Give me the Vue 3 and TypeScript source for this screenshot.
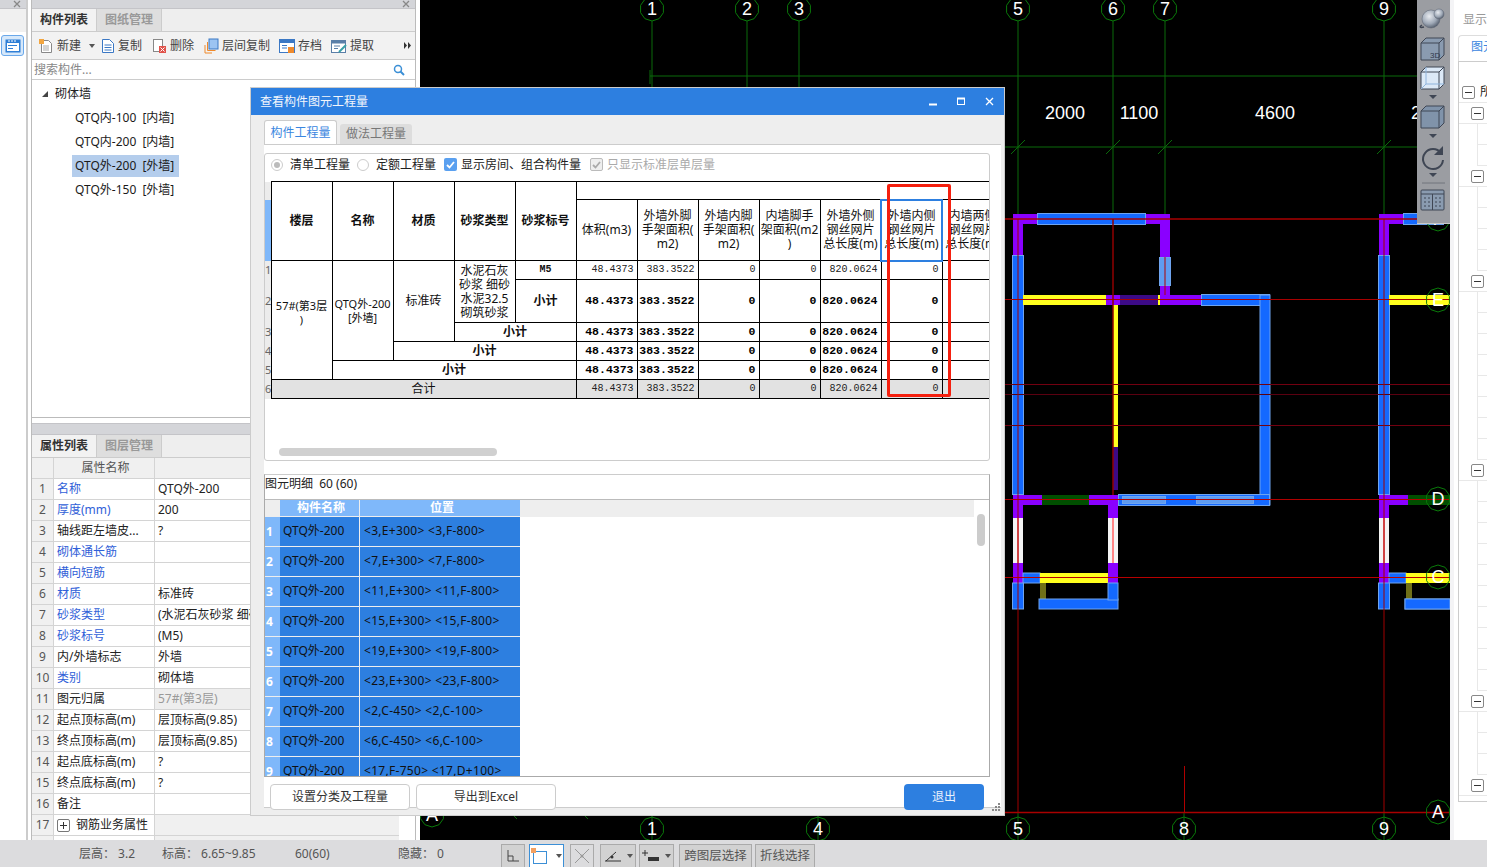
<template>
  <div class="page">
    <div class="main">
      <aside class="rail">
        <div class="grip">
          <svg class="close-x" width="8" height="8" viewBox="0 0 8 8"><path d="M1 1l6 6M7 1L1 7" stroke="#888" stroke-width="1.300" /></svg>
        </div>
        <div class="rail-tab"></div>
        <div class="rail-btn">
          <svg width="16" height="14" viewBox="0 0 16 14">
            <rect x="0.5" y="0.5" width="15" height="13" fill="#2f7fd6" />
            <rect x="2" y="4" width="12" height="8" fill="#fff" />
            <path d="M3 2h2M6 2h2M9 2h2" stroke="#fff" />
            <path d="M3 6.5h9M3 9.5h5" stroke="#2f7fd6" />
          </svg>
        </div>
      </aside>
      <div class="rail-gap"></div>

      <section class="left">
        <div class="list-panel">
          <div class="grip">
            <svg class="close-x" width="8" height="8" viewBox="0 0 8 8"><path d="M1 1l6 6M7 1L1 7" stroke="#888" stroke-width="1.300" /></svg>
          </div>
          <div class="tabs">
            <span class="tab on">构件列表</span>
            <span class="tab">图纸管理</span>
          </div>
          <div class="toolbar">
            <span class="tool new-tool">
              <svg width="16" height="16" viewBox="0 0 16 16"><path d="M3.5 2.5h7l3 3v9h-10z" fill="#fff" stroke="#888" /><rect x="1" y="1" width="5" height="5" fill="#f3a640" /><path d="M5 8h6M5 10h6M5 12h6" stroke="#aaa" /></svg>
              新建<i class="caret"></i>
            </span>
            <span class="tool">
              <svg width="14" height="16" viewBox="0 0 14 16"><path d="M1.5 1.5h7l4 4v9h-11z" fill="#fff" stroke="#3b78c4" /><path d="M3.5 7h7M3.5 9.5h7M3.5 12h7" stroke="#3b78c4" /></svg>
              复制
            </span>
            <span class="tool">
              <svg width="15" height="16" viewBox="0 0 15 16"><rect x="1.5" y="1.5" width="9" height="12" fill="#fff" stroke="#888" /><rect x="7" y="8" width="7" height="7" fill="#e0524a" /><path d="M8.5 9.5l4 4M12.5 9.5l-4 4" stroke="#fff" /></svg>
              删除
            </span>
            <span class="tool">
              <svg width="15" height="16" viewBox="0 0 15 16"><rect x="5" y="1" width="9" height="10" fill="#9cc4f2" stroke="#3b78c4" /><path d="M3.5 4v8.5h8M1 7v8h7" fill="none" stroke="#ef8a2c" /></svg>
              层间复制
            </span>
            <span class="tool">
              <svg width="16" height="16" viewBox="0 0 16 16"><rect x="0.5" y="1.5" width="15" height="13" fill="#fff" stroke="#3b78c4" /><rect x="1" y="2" width="14" height="3" fill="#3b78c4" /><path d="M3 7.5h5M3 10h5" stroke="#3b78c4" /><rect x="9" y="9" width="6" height="6" fill="#ef8a2c" /></svg>
              存档
            </span>
            <span class="tool">
              <svg width="16" height="16" viewBox="0 0 16 16"><rect x="0.5" y="2.5" width="14" height="12" fill="#fff" stroke="#5a7fa8" /><rect x="1" y="3" width="13" height="2.5" fill="#5a7fa8" /><path d="M3 8h6M3 10.5h4" stroke="#5a7fa8" /><path d="M8 14l7-7" stroke="#39a0a8" stroke-width="2" /></svg>
              提取
            </span>
            <svg class="more" width="8" height="7" viewBox="0 0 8 7"><path d="M0 0l3 3.500L0 7zM4 0l3 3.500L4 7z" fill="#333" /></svg>
          </div>
          <div class="search">
            <span>搜索构件...</span>
            <svg width="12" height="12" viewBox="0 0 12 12"><circle cx="5" cy="5" r="3.5" fill="none" stroke="#3b8fd6" stroke-width="1.5" /><path d="M7.5 7.5l3.5 3.5" stroke="#3b8fd6" stroke-width="2" /></svg>
          </div>
          <div class="tree">
            <div class="tree-root"><i class="tri"></i>砌体墙</div>
            <div v-for="item in treeItems" :key="item" class="tree-item">
              <span :class="{ sel: item === 'QTQ外-200 [外墙]' }">{{ item }}</span>
            </div>
          </div>
        </div>

        <div class="prop-panel">
          <div class="grip small"></div>
          <div class="tabs">
            <span class="tab on">属性列表</span>
            <span class="tab">图层管理</span>
          </div>
          <div class="prop-row head">
            <span class="pnum"></span><span class="pname center">属性名称</span><span class="pval"></span>
          </div>
          <div v-for="(p, i) in props" :key="i" class="prop-row">
            <span class="pnum">{{ p.name ? i + 1 : '' }}</span>
            <span class="pname" :class="{ link: p.link }"><i v-if="p.plus" class="plus"></i>{{ p.name }}</span>
            <span class="pval" :class="{ muted: p.muted, filled: p.plus }">{{ p.value }}</span>
          </div>
        </div>
      </section>
      <div class="left-gap"></div>

      <div class="canvas">
        <svg width="1030" height="840" viewBox="420 0 1030 840" class="cad">
          <g stroke="#0a6a0a" fill="none">
            <path d="M650 76H1417M650 70V84M640 147H1417" />
            <path v-for="x in topAxes" :key="'t' + x" :d="`M${x} 21V214`" />
            <path v-for="x in [1018, 1113, 1165, 1384]" :key="'s' + x" :d="`M${x - 7} 154L${x + 7} 140`" />
            <path d="M513 815l4 4M584 815l4 4M652 815V840M818 815V840M1018 812V840M1184 812V840M1384 812V840" />
          </g>
          <rect
            v-for="(r, i) in walls"
            :key="'w' + i"
            :x="r[0]"
            :y="r[1]"
            :width="r[2]"
            :height="r[3]"
            :fill="fills[r[4]]"
            :stroke="r[4] === 'b' || r[4] === 'c' ? '#6fa4ee' : 'none'"
          />
          <g fill="none">
            <path v-for="l in redLines" :key="l.d" :d="l.d" :stroke="l.c" :stroke-width="l.w" />
          </g>
          <g v-for="b in bubbles" :key="b.t + b.x">
            <polygon :points="octagon(b.x, b.y)" fill="none" stroke="#0a7a0a" />
            <text :x="b.x" :y="b.y + 6" class="bubble-text">{{ b.t }}</text>
          </g>
          <text x="1065" y="119" class="dim">2000</text>
          <text x="1139" y="119" class="dim">1100</text>
          <text x="1275" y="119" class="dim">4600</text>
          <text x="1416" y="119" class="dim">2</text>
        </svg>

        <div class="float-tools">
          <svg width="33" height="223" viewBox="0 0 33 223">
            <defs>
              <radialGradient id="ball" cx="0.4" cy="0.35" r="0.7">
                <stop offset="0" stop-color="#e8ebf0" />
                <stop offset="0.6" stop-color="#9ea8b6" />
                <stop offset="1" stop-color="#4c5564" />
              </radialGradient>
            </defs>
            <path d="M5 25c-3 2-2 3 2 2" fill="none" stroke="#3f4654" stroke-width="1.500" />
            <circle cx="14" cy="19" r="9" fill="url(#ball)" stroke="#5a6372" stroke-width="0.500" />
            <circle cx="22" cy="14" r="5" fill="url(#ball)" stroke="#5a6372" stroke-width="0.500" />
            <path d="M4 43h18v17H4zM4 43l5-5h18v17l-5 5M22 43l5-5" fill="#8a9bb0" stroke="#3f4654" />
            <text x="13" y="58" class="cube-text">3D</text>
            <path d="M4 72h18v17H4zM4 72l5-5h18v17l-5 5M22 72l5-5" fill="#dce9f7" stroke="#3f4654" />
            <path d="M9 67v17h18M9 84l-5 5" fill="none" stroke="#8fb4dc" />
            <path d="M12 95h8l-4 4z" fill="#3f4654" />
            <path d="M4 111h18v17H4zM4 111l5-5h18v17l-5 5M22 111l5-5" fill="#8093aa" stroke="#3f4654" />
            <path d="M12 134h8l-4 4z" fill="#3f4654" />
            <path d="M24 153a10 10 0 1 0 2 7" fill="none" stroke="#3f4654" stroke-width="2" />
            <path d="M26 146v9h-9z" fill="#3f4654" />
            <path d="M12 173h8l-4 4z" fill="#3f4654" />
            <path d="M5 183h23" stroke="#71757c" />
            <rect x="4" y="190" width="23" height="20" rx="1" fill="#8a9bb0" stroke="#3f4654" />
            <path d="M4 194h23M15.500 194v16M7 198h2M11 198h2M7 202h2M11 202h2M7 206h2M11 206h2M18 198h2M22 198h2M18 202h2M22 202h2M18 206h2M22 206h2" stroke="#3f4654" />
          </svg>
        </div>
      </div>

      <aside class="right">
        <div class="right-head">显示</div>
        <div class="right-tabs"><span>图元</span></div>
        <div class="right-tree">
          <div v-for="n in 34" :key="n" class="rt-row" :class="rowKind(n - 1)">
            <template v-if="n === 1"><i class="minus"></i><b>所</b></template>
            <i v-else-if="rowKind(n - 1) === 'group'" class="minus"></i>
          </div>
        </div>
      </aside>

      <div class="dialog">
        <div class="dlg-title">
          <span>查看构件图元工程量</span>
          <div class="win-btns">
            <svg width="9" height="9" viewBox="0 0 9 9"><path d="M0 7.500h8" stroke="#fff" stroke-width="2" /></svg>
            <svg width="9" height="9" viewBox="0 0 9 9"><rect x="0.500" y="1.500" width="7" height="6" fill="none" stroke="#fff" /><path d="M0 1.500h8" stroke="#fff" stroke-width="2" /></svg>
            <svg width="9" height="9" viewBox="0 0 9 9"><path d="M1 1l7 7M8 1l-7 7" stroke="#fff" stroke-width="1.300" /></svg>
          </div>
        </div>
        <div class="dlg-tabs">
          <span class="dtab on">构件工程量</span>
          <span class="dtab">做法工程量</span>
        </div>
        <div class="dlg-panel">
          <div class="sum-box">
            <div class="options">
              <i class="radio checked"></i><span class="w-radio">清单工程量</span>
              <i class="radio"></i><span class="w-radio2">定额工程量</span>
              <i class="check"><svg width="9" height="8" viewBox="0 0 9 8"><path d="M1 4l2.500 2.500L8 1" fill="none" stroke="#fff" stroke-width="1.800" /></svg></i>
              <span class="w-check">显示房间、组合构件量</span>
              <i class="check off"><svg width="9" height="8" viewBox="0 0 9 8"><path d="M1 4l2.500 2.500L8 1" fill="none" stroke="#aaa" stroke-width="1.800" /></svg></i>
              <span class="disabled">只显示标准层单层量</span>
            </div>
            <div class="sheet-clip">
              <table class="sheet">
                <colgroup>
                  <col class="c-num" />
                  <col v-for="n in 12" :key="n" class="c-col" />
                </colgroup>
                <tbody>
                  <tr class="h1">
                    <td class="rn rn-top"></td>
                    <th v-for="h in fixedHeads" :key="h" rowspan="2">{{ h }}</th>
                    <td colspan="7"></td>
                  </tr>
                  <tr class="h2">
                    <td class="rn rn-blue"></td>
                    <td v-for="(h, i) in qtyHeads" :key="h" class="qh" :class="{ picked: i === 5 }">{{ h }}</td>
                  </tr>
                  <tr class="r19">
                    <td class="rn">1</td>
                    <td rowspan="5" class="floor">{{ floorText }}</td>
                    <td rowspan="4" class="qh name">{{ nameText }}</td>
                    <td rowspan="3" class="mid">标准砖</td>
                    <td rowspan="2" class="qh">{{ mortarText }}</td>
                    <td class="num-c">M5</td>
                    <td v-for="(q, i) in qty" :key="i" class="num">{{ q }}</td>
                    <td></td>
                  </tr>
                  <tr class="r43">
                    <td class="rn">2</td>
                    <th>小计</th>
                    <td v-for="(q, i) in qty" :key="i" class="num bold">{{ q }}</td>
                    <td></td>
                  </tr>
                  <tr class="r19">
                    <td class="rn">3</td>
                    <th colspan="2">小计</th>
                    <td v-for="(q, i) in qty" :key="i" class="num bold">{{ q }}</td>
                    <td></td>
                  </tr>
                  <tr class="r19">
                    <td class="rn">4</td>
                    <th colspan="3">小计</th>
                    <td v-for="(q, i) in qty" :key="i" class="num bold">{{ q }}</td>
                    <td></td>
                  </tr>
                  <tr class="r19">
                    <td class="rn">5</td>
                    <th colspan="4">小计</th>
                    <td v-for="(q, i) in qty" :key="i" class="num bold">{{ q }}</td>
                    <td></td>
                  </tr>
                  <tr class="r19 total">
                    <td class="rn">6</td>
                    <td colspan="5" class="mid">合计</td>
                    <td v-for="(q, i) in qty" :key="i" class="num">{{ q }}</td>
                    <td></td>
                  </tr>
                </tbody>
              </table>
            </div>
            <div class="hscroll"><i></i></div>
          </div>

          <div class="detail-box">
            <div class="detail-title">图元明细&nbsp;&nbsp;60 (60)</div>
            <div class="detail-grid">
              <div class="detail-rows">
                <div class="d-row d-head">
                  <span class="d-num"></span><span class="d-name">构件名称</span><span class="d-pos">位置</span>
                </div>
                <div v-for="(pos, i) in positions" :key="pos" class="d-row">
                  <span class="d-num">{{ i + 1 }}</span>
                  <span class="d-name">QTQ外-200</span>
                  <span class="d-pos">{{ pos }}</span>
                </div>
              </div>
              <div class="d-scroll"><i></i></div>
            </div>
          </div>

          <div class="dlg-actions">
            <button class="btn">设置分类及工程量</button>
            <button class="btn">导出到Excel</button>
            <button class="btn primary">退出</button>
          </div>
        </div>
        <svg class="resize-grip" width="9" height="9" viewBox="0 0 9 9">
          <path d="M6 0h2v2H6zM3 3h2v2H3zM6 3h2v2H6zM0 6h2v2H0zM3 6h2v2H3zM6 6h2v2H6z" fill="#888" />
        </svg>
        <div class="red-mark"></div>
      </div>
    </div>

    <footer class="status">
      <span class="s1">层高：&nbsp;3.2</span>
      <span class="s2">标高：&nbsp;6.65~9.85</span>
      <span class="s3">60(60)</span>
      <span class="s3">隐藏：&nbsp;0</span>
      <button class="sbtn w24">
        <svg width="14" height="14" viewBox="0 0 14 14"><path d="M2 1v11h11M2 7h5v5" fill="none" stroke="#444" /></svg>
      </button>
      <button class="sbtn w35 active">
        <svg width="20" height="16" viewBox="0 0 20 16"><rect x="2.500" y="3.500" width="13" height="12" fill="none" stroke="#3b8fd6" /><rect x="0" y="0" width="5" height="5" fill="#f3a060" /></svg>
        <i class="caret"></i>
      </button>
      <button class="sbtn w24 faded">
        <svg width="18" height="18" viewBox="0 0 18 18"><path d="M2 2l14 14M16 2L2 16" stroke="#999" /><circle cx="9" cy="9" r="1.500" fill="#999" /></svg>
      </button>
      <button class="sbtn w36">
        <svg width="18" height="14" viewBox="0 0 18 14"><path d="M1 12h16M2 12L12 3" stroke="#333" fill="none" /><circle cx="8" cy="8" r="1.500" fill="#333" /></svg>
        <i class="caret"></i>
      </button>
      <button class="sbtn w35 last-tool">
        <svg width="18" height="14" viewBox="0 0 18 14"><path d="M3 1v6M0 4h6" stroke="#333" /><rect x="6" y="8" width="11" height="4" fill="#333" /></svg>
        <i class="caret"></i>
      </button>
      <button class="sbtn text w73">跨图层选择</button>
      <button class="sbtn text w60">折线选择</button>
    </footer>
  </div>
</template>

<script setup lang="ts">
interface Prop {
  name: string
  value?: string
  link?: boolean
  muted?: boolean
  plus?: boolean
}

type Wall = [number, number, number, number, string]

const treeItems = ['QTQ内-100 [内墙]', 'QTQ内-200 [内墙]', 'QTQ外-200 [外墙]', 'QTQ外-150 [外墙]']

const props: Prop[] = [
  { name: '名称', value: 'QTQ外-200', link: true },
  { name: '厚度(mm)', value: '200', link: true },
  { name: '轴线距左墙皮...', value: '?' },
  { name: '砌体通长筋', link: true },
  { name: '横向短筋', link: true },
  { name: '材质', value: '标准砖', link: true },
  { name: '砂浆类型', value: '(水泥石灰砂浆 细砂 水泥32.5 砌筑砂浆)', link: true },
  { name: '砂浆标号', value: '(M5)', link: true },
  { name: '内/外墙标志', value: '外墙' },
  { name: '类别', value: '砌体墙', link: true },
  { name: '图元归属', value: '57#(第3层)', muted: true },
  { name: '起点顶标高(m)', value: '层顶标高(9.85)' },
  { name: '终点顶标高(m)', value: '层顶标高(9.85)' },
  { name: '起点底标高(m)', value: '?' },
  { name: '终点底标高(m)', value: '?' },
  { name: '备注' },
  { name: '钢筋业务属性', plus: true },
  { name: '', plus: true },
]

const fixedHeads = ['楼层', '名称', '材质', '砂浆类型', '砂浆标号']
const qtyHeads = [
  '体积(m3)',
  '外墙外脚\n手架面积(\nm2)',
  '外墙内脚\n手架面积(\nm2)',
  '内墙脚手\n架面积(m2\n)',
  '外墙外侧\n钢丝网片\n总长度(m)',
  '外墙内侧\n钢丝网片\n总长度(m)',
  '内墙两侧\n钢丝网片\n总长度(m)',
]
const qty = ['48.4373', '383.3522', '0', '0', '820.0624', '0']

// the compiler collapses line breaks in the template, so these live here
const floorText = '57#(第3层\n)'
const nameText = 'QTQ外-200\n[外墙]'
const mortarText = '水泥石灰\n砂浆 细砂\n水泥32.5\n砌筑砂浆'

const positions = [
  '<3,E+300> <3,F-800>',
  '<7,E+300> <7,F-800>',
  '<11,E+300> <11,F-800>',
  '<15,E+300> <15,F-800>',
  '<19,E+300> <19,F-800>',
  '<23,E+300> <23,F-800>',
  '<2,C-450> <2,C-100>',
  '<6,C-450> <6,C-100>',
  '<17,F-750> <17,D+100>',
]

const groupRows = [1, 4, 9, 18, 29, 33]
const rowKind = (i: number): string => {
  if (i === 0) return 'top'
  return groupRows.includes(i) ? 'group' : 'leaf'
}

const topAxes = [652, 747, 799, 1018, 1113, 1165, 1384]

const fills: Record<string, string> = {
  p: '#8a00ff',
  b: '#1469ff',
  c: '#5f9cf0',
  y: '#ffff1e',
  d: '#3c0a86',
  g: '#004f00',
  w: '#f4f4f4',
  o: '#707018',
  k: '#ff8686',
}

// one bay of the plan, repeated 366px further right and clipped by the svg
const lowerBay = (dx: number): Wall[] => [
  [1013 + dx, 505, 10, 13, 'p'],
  [1013 + dx, 518, 10, 45, 'w'],
  [1017 + dx, 518, 2, 45, 'k'],
  [1013 + dx, 563, 10, 20, 'p'],
  [1023 + dx, 573, 17, 10, 'b'],
  [1040 + dx, 573, 68, 10, 'y'],
  [1040 + dx, 583, 6, 16, 'o'],
  [1012.5 + dx, 583, 11, 26, 'b'],
  [1039 + dx, 599, 79, 10, 'b'],
]

const walls: Wall[] = [
  [1013, 214, 157, 10, 'p'],
  [1013, 214, 10, 41, 'p'],
  [1160, 214, 10, 81, 'p'],
  [1037.5, 213.5, 108, 11, 'b'],
  [1012.5, 255.5, 11, 239, 'b'],
  [1159.5, 257.5, 11, 28, 'c'],
  [1023, 295, 83, 10, 'y'],
  [1106, 295, 14, 10, 'p'],
  [1120, 295, 38, 10, 'd'],
  [1158, 295, 2, 10, 'y'],
  [1160, 295, 41, 10, 'p'],
  [1201.5, 294.5, 68, 11, 'b'],
  [1260, 295, 10, 210, 'b'],
  [1113, 305, 5, 142, 'y'],
  [1113, 447, 5, 43, 'd'],
  [1013, 495, 29, 10, 'p'],
  [1042, 495, 47, 10, 'g'],
  [1089, 495, 29, 10, 'p'],
  [1118.5, 494.5, 151, 11, 'b'],
  [1122.5, 496.5, 43, 7, 'c'],
  [1196.5, 496.5, 57, 7, 'c'],
  ...lowerBay(0),
  [1108, 505, 10, 13, 'p'],
  [1108, 518, 10, 45, 'w'],
  [1112, 518, 2, 45, 'k'],
  [1108, 563, 10, 20, 'p'],
  [1108, 583, 10, 17, 'b'],
  [1379, 214, 38, 10, 'p'],
  [1379, 214, 10, 41, 'p'],
  [1403.5, 213.5, 40, 11, 'b'],
  [1378.5, 255.5, 11, 239, 'b'],
  [1389, 295, 61, 10, 'y'],
  [1379, 495, 29, 10, 'p'],
  [1408, 495, 42, 10, 'g'],
  ...lowerBay(366),
  [1405, 599, 45, 10, 'b'],
  [1406, 573, 44, 10, 'y'],
]

const redLines = [
  { d: 'M1003 219H1450', c: '#a80000', w: 1.5 },
  { d: 'M1003 299.5H1450', c: '#a80000', w: 1 },
  { d: 'M1003 384.5H1450', c: '#720010', w: 1 },
  { d: 'M1003 394.5H1450', c: '#5a0010', w: 1 },
  { d: 'M1003 425.5H1450', c: '#720010', w: 1 },
  { d: 'M1003 499.5H1450', c: '#b00000', w: 1 },
  { d: 'M1003 577.5H1450', c: '#b80000', w: 1 },
  { d: 'M1003 812.5H1450', c: '#a80000', w: 1.5 },
  { d: 'M1018 219V812', c: '#a00000', w: 1 },
  { d: 'M1113 219V495', c: '#900000', w: 1.5 },
  { d: 'M1165 257V295', c: '#b00000', w: 1 },
  { d: 'M1384 219V812', c: '#a00000', w: 1 },
  { d: 'M1184.5 766V812', c: '#b00000', w: 1 },
]

const bubbles = [
  { t: '1', x: 652, y: 9 },
  { t: '2', x: 747, y: 9 },
  { t: '3', x: 799, y: 9 },
  { t: '5', x: 1018, y: 9 },
  { t: '6', x: 1113, y: 9 },
  { t: '7', x: 1165, y: 9 },
  { t: '9', x: 1384, y: 9 },
  { t: 'A', x: 432, y: 815 },
  { t: '1', x: 652, y: 829 },
  { t: '4', x: 818, y: 829 },
  { t: '5', x: 1018, y: 829 },
  { t: '8', x: 1184, y: 829 },
  { t: '9', x: 1384, y: 829 },
  { t: 'F', x: 1438, y: 219 },
  { t: 'E', x: 1438, y: 300 },
  { t: 'D', x: 1438, y: 499 },
  { t: 'C', x: 1438, y: 577 },
  { t: 'A', x: 1438, y: 812 },
]

const octagon = (cx: number, cy: number): string => {
  const pts: string[] = []
  for (let i = 0; i < 10; i++) {
    const a = (i * Math.PI) / 5
    pts.push(`${(cx + 12 * Math.sin(a)).toFixed(1)},${(cy - 12 * Math.cos(a)).toFixed(1)}`)
  }
  return pts.join(' ')
}
</script>

<style>
html,
body {
  margin: 0;
  overflow: hidden;
  background: #fff;
}
</style>

<style scoped>
.page {
  position: relative;
  width: 1487px;
  height: 867px;
  display: flex;
  flex-direction: column;
  overflow: hidden;
  font-family: "Noto Sans", "Noto Sans CJK SC", sans-serif;
  font-size: 12px;
  line-height: 16px;
  color: #222;
  background: #fff;
}
.main {
  flex: 1;
  min-height: 0;
  display: flex;
}
.grip {
  height: 8px;
  background: #d4d5d9;
  border-bottom: 1px solid #c4c4c8;
  position: relative;
}
.grip.small {
  height: 10px;
  border-top: 1px solid #c4c4c8;
}
.close-x {
  position: absolute;
  right: 5px;
  top: 0;
}
.rail {
  width: 26px;
  flex: none;
  border-right: 2px solid #ccc;
}
.rail-tab {
  height: 23px;
  background: #f0f0f0;
}
.rail-btn {
  margin: 3px 0 0 1px;
  width: 23px;
  height: 21px;
  display: flex;
  align-items: center;
  justify-content: center;
  border: 1px solid #6aa8ea;
  border-radius: 3px;
  background: #d6e8fa;
  box-sizing: border-box;
}
.rail-gap {
  width: 3px;
  flex: none;
}
.left {
  width: 385px;
  flex: none;
  display: flex;
  flex-direction: column;
  border-left: 1px solid #bbb;
  border-right: 1px solid #bbb;
  box-sizing: border-box;
  overflow: hidden;
}
.left-gap {
  width: 4px;
  flex: none;
}
.list-panel {
  height: 418px;
  flex: none;
  display: flex;
  flex-direction: column;
  border-bottom: 1px solid #bbb;
  box-sizing: border-box;
}
.tabs {
  height: 22px;
  flex: none;
  display: flex;
  background: #eee;
  border-bottom: 1px solid #ccc;
}
.tab {
  width: 65px;
  display: flex;
  align-items: center;
  justify-content: center;
  background: #dedede;
  color: #999;
  font-weight: 700;
  border-right: 1px solid #ccc;
  box-sizing: border-box;
}
.tab.on {
  background: #f2f2f2;
  color: #333;
}
.toolbar {
  height: 27px;
  flex: none;
  display: flex;
  align-items: center;
  padding-left: 6px;
  background: #f2f2f2;
  border-bottom: 1px solid #ccc;
  color: #444;
}
.tool {
  display: flex;
  align-items: center;
  gap: 3px;
  flex: none;
  width: 52px;
}
.tool.new-tool {
  width: 63px;
}
.tool:nth-child(2) {
  width: 51px;
}
.tool:nth-child(4) {
  width: 75px;
}
.caret {
  display: inline-block;
  margin-left: 5px;
  border: 3px solid transparent;
  border-top: 4px solid #555;
  border-bottom: 0;
}
.more {
  margin-left: auto;
  margin-right: 3px;
}
.search {
  height: 19px;
  flex: none;
  display: flex;
  align-items: center;
  justify-content: space-between;
  padding: 0 10px 0 2px;
  border-bottom: 1px solid #ccc;
  background: #fff;
  color: #888;
}
.tree {
  flex: 1;
  padding-top: 2px;
  background: #fff;
}
.tree-root {
  height: 24px;
  display: flex;
  align-items: center;
  padding-left: 23px;
  color: #222;
}
.tri {
  width: 0;
  height: 0;
  margin-left: -13px;
  margin-right: 7px;
  border-left: 6px solid transparent;
  border-bottom: 6px solid #444;
}
.tree-item {
  height: 24px;
  display: flex;
  align-items: center;
  padding-left: 40px;
  color: #1a1a1a;
  word-spacing: 3px;
}
.tree-item span {
  padding: 3px 5px 3px 3px;
}
.tree-item .sel {
  background: #b4cdec;
}
.prop-panel {
  flex: 1;
  min-height: 0;
  margin-top: 5px;
  overflow: hidden;
}
.prop-row {
  height: 21px;
  display: flex;
  box-sizing: border-box;
  border-bottom: 1px solid #d4d4d4;
  width: 367px;
}
.prop-row.head {
  background: #f0f0f0;
  color: #555;
}
.pnum {
  width: 22px;
  flex: none;
  text-align: center;
  line-height: 20px;
  background: #f0f0f0;
  color: #555;
  border-right: 1px solid #d4d4d4;
  box-sizing: border-box;
}
.pname {
  width: 101px;
  flex: none;
  padding-left: 3px;
  line-height: 20px;
  border-right: 1px solid #d4d4d4;
  box-sizing: border-box;
  white-space: nowrap;
  overflow: hidden;
  display: flex;
  align-items: center;
}
.pname.center {
  justify-content: center;
}
.pname.link {
  color: #3060d8;
}
.plus {
  width: 11px;
  height: 11px;
  margin-right: 6px;
  border: 1px solid #777;
  border-radius: 2px;
  flex: none;
  background:
    linear-gradient(#333, #333) center / 7px 1px no-repeat,
    linear-gradient(#333, #333) center / 1px 7px no-repeat;
}
.pval {
  flex: 1;
  padding-left: 3px;
  line-height: 20px;
  white-space: nowrap;
  overflow: hidden;
}
.pval.muted {
  background: #eee;
  color: #999;
}
.pval.filled {
  background: #f0f0f0;
}
.canvas {
  width: 1030px;
  flex: none;
  position: relative;
  background: #000;
  overflow: hidden;
}
.cad {
  display: block;
}
.bubble-text {
  fill: #fff;
  font-family: "Liberation Sans", sans-serif;
  font-size: 18px;
  text-anchor: middle;
}
.dim {
  fill: #fff;
  font-family: "Liberation Sans", sans-serif;
  font-size: 18px;
  text-anchor: middle;
}
.float-tools {
  position: absolute;
  top: 0;
  right: 0;
  width: 33px;
  height: 223px;
  background: #9b9da2;
  border-bottom: 1px solid #c8c8c8;
}
.float-tools svg {
  display: block;
}
.cube-text {
  fill: #30384a;
  font-family: "Liberation Sans", sans-serif;
  font-size: 8px;
}
.right {
  flex: 1;
  min-width: 0;
  padding-left: 4px;
  border-left: 4px solid #f4f4f6;
  overflow: hidden;
}
.right-head {
  height: 35px;
  padding: 12px 0 0 5px;
  box-sizing: border-box;
  color: #999;
  white-space: nowrap;
}
.right-tabs {
  height: 26px;
  padding: 3px 0 0 12px;
  box-sizing: border-box;
  color: #3a86e0;
  white-space: nowrap;
  border-left: 1px solid #ddd;
  border-top: 1px solid #ddd;
  border-top-left-radius: 4px;
}
.right-tree {
  height: 741px;
  border-left: 1px solid #ccc;
  border-top: 1px solid #ccc;
  border-bottom: 1px solid #ccc;
  padding-top: 20px;
  box-sizing: border-box;
}
.rt-row {
  height: 21px;
  display: flex;
  align-items: center;
  border-bottom: 1px solid #e8e8e8;
  box-sizing: border-box;
  position: relative;
}
.rt-row b {
  margin-left: 5px;
  font-weight: 400;
  color: #222;
}
.rt-row.leaf {
  margin-left: 18px;
  border-left: 1px solid #e8e8e8;
}
.minus {
  width: 11px;
  height: 11px;
  margin-left: 3px;
  border: 1px solid #888;
  border-radius: 2px;
  flex: none;
  background: linear-gradient(#333, #333) center / 7px 1px no-repeat;
}
.rt-row.group .minus {
  margin-left: 12px;
}
.dialog {
  position: absolute;
  left: 251px;
  top: 88px;
  width: 753px;
  height: 727px;
  display: flex;
  flex-direction: column;
  background: #eee;
  box-shadow: 0 0 0 1px #ccc;
}
.dlg-title {
  height: 27px;
  flex: none;
  display: flex;
  align-items: center;
  justify-content: space-between;
  padding: 0 10px 0 9px;
  background: #2d7fe0;
  color: #f2f6fc;
}
.win-btns {
  display: flex;
  gap: 19px;
}
.dlg-tabs {
  height: 29px;
  flex: none;
  display: flex;
  align-items: flex-end;
  padding-left: 13px;
  gap: 3px;
}
.dtab {
  width: 72px;
  height: 20px;
  line-height: 20px;
  text-align: center;
  background: #ddd;
  border-radius: 3px 3px 0 0;
  color: #777;
}
.dtab.on {
  width: 73px;
  height: 24px;
  line-height: 23px;
  background: #fff;
  color: #3a86e0;
  border: 1px solid #ccc;
  border-bottom: 0;
  box-sizing: border-box;
}
.dlg-panel {
  width: 737px;
  height: 664px;
  margin-left: 13px;
  padding-top: 8px;
  background: #fff;
  border-top: 1px solid #ccc;
  border-bottom: 1px solid #ccc;
  box-sizing: border-box;
}
.sum-box {
  width: 726px;
  height: 308px;
  box-sizing: border-box;
  border: 1px solid #ccc;
  border-radius: 3px;
  display: flex;
  flex-direction: column;
}
.options {
  height: 27px;
  flex: none;
  display: flex;
  align-items: center;
  color: #222;
  padding: 0 0 6px 6px;
  box-sizing: border-box;
}
.radio {
  width: 12px;
  height: 12px;
  border: 1px solid #ccc;
  border-radius: 50%;
  box-sizing: border-box;
  margin-right: 7px;
  position: relative;
  flex: none;
}
.radio.checked::after {
  content: "";
  position: absolute;
  left: 2px;
  top: 2px;
  width: 6px;
  height: 6px;
  background: #bbb;
  border-radius: 50%;
}
.w-radio {
  width: 67px;
}
.w-radio2 {
  width: 68px;
}
.check {
  width: 13px;
  height: 13px;
  margin-right: 4px;
  border-radius: 2px;
  background: #5aa0f0;
  display: flex;
  align-items: center;
  justify-content: center;
  flex: none;
}
.check.off {
  background: #eee;
  border: 1px solid #bbb;
  box-sizing: border-box;
}
.w-check {
  width: 129px;
}
.disabled {
  color: #aaa;
}
.sheet-clip {
  height: 267px;
  flex: none;
  overflow: hidden;
}
.sheet {
  table-layout: fixed;
  width: 738px;
  border-collapse: collapse;
  font-size: 12px;
  line-height: 14px;
  color: #111;
}
.c-num {
  width: 6px;
}
.c-col {
  width: 61px;
}
.sheet td,
.sheet th {
  border: 1px solid #000;
  padding: 0;
  text-align: center;
  vertical-align: middle;
  overflow: hidden;
}
.sheet th {
  font-weight: 700;
  white-space: nowrap;
}
.h1 {
  height: 18px;
}
.h2 {
  height: 61px;
}
.r19 {
  height: 19px;
}
.r43 {
  height: 43px;
}
.sheet td.rn {
  border: 0;
  background: #ececec;
  font-size: 11px;
  color: #666;
  text-align: left;
  white-space: nowrap;
}
.sheet td.rn-blue {
  background: #7fb8fa;
}
.qh {
  white-space: pre;
}
.sheet td.name {
  font-size: 11px;
}
.sheet td.floor {
  white-space: pre;
  font-size: 11px;
  padding-bottom: 14px;
}
.sheet td.num {
  text-align: right;
  padding-right: 3px;
  font-family: "Liberation Mono", monospace;
  font-size: 10px;
  color: #222;
}
.sheet td.num.bold {
  font-size: 11.5px;
  font-weight: 700;
  color: #000;
}
.sheet td.num-c {
  font-family: "Liberation Mono", monospace;
  font-size: 10px;
  font-weight: 700;
}
.sheet .total td {
  background: #e2e2e2;
}
.sheet .total td.rn {
  background: #ececec;
}
.sheet td.picked {
  outline: 2px solid #2d7fe0;
  outline-offset: -1px;
}
.hscroll {
  flex: 1;
  padding: 0 0 0 14px;
}
.hscroll i {
  display: block;
  width: 218px;
  height: 8px;
  border-radius: 4px;
  background: #d0d0d0;
}
.detail-box {
  width: 726px;
  height: 303px;
  margin-top: 13px;
  box-sizing: border-box;
  border: 1px solid #aaa;
  border-top-color: #ccc;
  display: flex;
  flex-direction: column;
}
.detail-title {
  height: 25px;
  flex: none;
  line-height: 17px;
  border-bottom: 1px solid #bbb;
  box-sizing: border-box;
}
.detail-grid {
  flex: 1;
  min-height: 0;
  display: flex;
}
.detail-rows {
  flex: 1;
  min-width: 0;
  overflow: hidden;
}
.d-row {
  height: 30px;
  display: flex;
  box-sizing: border-box;
}
.d-num {
  width: 15px;
  flex: none;
  display: flex;
  align-items: center;
  padding-left: 1px;
  box-sizing: border-box;
  background: #7fb8fa;
  color: #fff;
  font-weight: 700;
  border-bottom: 1px solid #eee;
}
.d-name {
  width: 80px;
  flex: none;
  padding-left: 3px;
  box-sizing: border-box;
  background: #2d7fe0;
  color: #111;
  line-height: 28px;
  border-right: 1px solid #eee;
  border-bottom: 1px solid #eee;
}
.d-pos {
  width: 160px;
  flex: none;
  padding-left: 4px;
  box-sizing: border-box;
  background: #2d7fe0;
  color: #111;
  line-height: 28px;
  letter-spacing: 0.3px;
  white-space: nowrap;
  border-bottom: 1px solid #eee;
}
.d-head {
  height: 17px;
  background: #eee;
}
.d-head .d-num {
  background: #eee;
}
.d-head .d-name,
.d-head .d-pos {
  background: #7fb8fa;
  color: #fff;
  font-weight: 700;
  letter-spacing: 0;
  line-height: 16px;
  text-align: center;
}
.d-scroll {
  width: 15px;
  flex: none;
  box-sizing: border-box;
  padding: 14px 0 0 3px;
}
.d-scroll i {
  display: block;
  width: 8px;
  height: 32px;
  border-radius: 4px;
  background: #ccc;
}
.dlg-actions {
  display: flex;
  gap: 6px;
  width: 714px;
  margin: 7px 0 0 6px;
}
.btn {
  width: 140px;
  height: 26px;
  padding: 0;
  border: 1px solid #ccc;
  border-radius: 4px;
  background: #fff;
  color: #333;
  font: inherit;
}
.btn.primary {
  width: 80px;
  margin-left: auto;
  border: 0;
  background: #2d7fe0;
  color: #e8f1fc;
}
.resize-grip {
  position: absolute;
  right: 3px;
  bottom: 3px;
}
.red-mark {
  position: absolute;
  left: 636px;
  top: 96px;
  width: 64px;
  height: 213px;
  box-sizing: border-box;
  border: 3px solid #f5200f;
  border-radius: 2px;
}
.status {
  height: 27px;
  flex: none;
  display: flex;
  align-items: center;
  padding-left: 79px;
  background: #dcdcde;
  color: #555;
}
.s1 {
  width: 83px;
}
.s2 {
  width: 133px;
}
.s3 {
  width: 103px;
}
.sbtn {
  height: 23px;
  margin: 4px 4px 0 0;
  padding: 0;
  display: flex;
  align-items: center;
  justify-content: center;
  background: #d2d2d2;
  border: 1px solid #aaa;
  border-bottom: 0;
  box-sizing: border-box;
  font: inherit;
  color: #555;
}
.sbtn.active {
  background: #fff;
  border-color: #3b8fd6;
}
.sbtn.faded {
  background: #dcdcde;
  margin-left: 2px;
  margin-right: 6px;
}
.sbtn.last-tool {
  margin-right: 5px;
}
.sbtn.text {
  margin-right: 3px;
  font-size: 12.5px;
}
.w24 {
  width: 24px;
}
.w35 {
  width: 35px;
}
.w36 {
  width: 36px;
  margin-right: 3px;
}
.w73 {
  width: 73px;
}
.w60 {
  width: 60px;
}
</style>
